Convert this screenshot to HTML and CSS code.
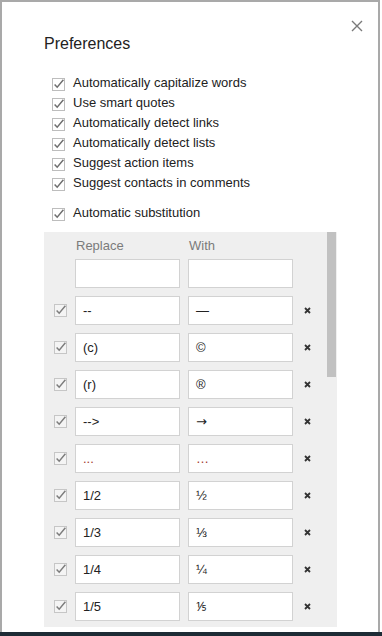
FILE: index.html
```html
<!DOCTYPE html>
<html lang="en">
<head>
  <meta charset="UTF-8">
  <meta name="viewport" content="width=device-width, initial-scale=1.0">
  <title>Preferences</title>
  <link rel="stylesheet" href="styles.css">
</head>
<body>
  <!-- shared icons -->
  <svg class="sprite" aria-hidden="true">
    <symbol id="check-on" viewBox="0 0 13 13">
      <rect x="0.5" y="0.5" width="12" height="12" fill="#fff" stroke="#bdbdbd"/>
      <path d="M2.6 6.4 L5.2 9.2 L11.4 1.8" fill="none" stroke="#6f6f6f" stroke-width="1.5"/>
    </symbol>
    <symbol id="check-dim" viewBox="0 0 13 13">
      <rect x="0.5" y="0.5" width="12" height="12" fill="#f4f4f4" stroke="#c6c6c6"/>
      <path d="M2.6 6.4 L5.2 9.2 L11.4 1.8" fill="none" stroke="#7d7d7d" stroke-width="1.5"/>
    </symbol>
    <symbol id="remove" viewBox="0 0 7 7">
      <path d="M1 1 L6 6 M6 1 L1 6" stroke="#333" stroke-width="1.8"/>
    </symbol>
  </svg>

  <div class="window">
    <div class="dialog">
      <div class="header">
        <h1 class="title">Preferences</h1>
        <svg class="close" viewBox="0 0 12 12">
          <path d="M1 1 L11 11 M11 1 L1 11" stroke="#7a7a7a" stroke-width="1.4"/>
        </svg>
      </div>

      <div class="options">
        <div class="option"><svg><use href="#check-on"/></svg>Automatically capitalize words</div>
        <div class="option"><svg><use href="#check-on"/></svg>Use smart quotes</div>
        <div class="option"><svg><use href="#check-on"/></svg>Automatically detect links</div>
        <div class="option"><svg><use href="#check-on"/></svg>Automatically detect lists</div>
        <div class="option"><svg><use href="#check-on"/></svg>Suggest action items</div>
        <div class="option"><svg><use href="#check-on"/></svg>Suggest contacts in comments</div>
        <div class="option spaced"><svg><use href="#check-on"/></svg>Automatic substitution</div>
      </div>

      <div class="subs">
        <div class="subs-list">
          <div class="sub-head">
            <span>Replace</span>
            <span>With</span>
          </div>

          <div class="sub-row first">
            <div class="spacer"></div>
            <div class="field"></div>
            <div class="field"></div>
          </div>

          <div class="sub-row">
            <svg class="box"><use href="#check-dim"/></svg>
            <div class="field">--</div>
            <div class="field">—</div>
            <svg class="del"><use href="#remove"/></svg>
          </div>
          <div class="sub-row">
            <svg class="box"><use href="#check-dim"/></svg>
            <div class="field">(c)</div>
            <div class="field">©</div>
            <svg class="del"><use href="#remove"/></svg>
          </div>
          <div class="sub-row">
            <svg class="box"><use href="#check-dim"/></svg>
            <div class="field">(r)</div>
            <div class="field">®</div>
            <svg class="del"><use href="#remove"/></svg>
          </div>
          <div class="sub-row">
            <svg class="box"><use href="#check-dim"/></svg>
            <div class="field">--&gt;</div>
            <div class="field arrow">→</div>
            <svg class="del"><use href="#remove"/></svg>
          </div>
          <div class="sub-row">
            <svg class="box"><use href="#check-dim"/></svg>
            <div class="field dots">...</div>
            <div class="field dots">…</div>
            <svg class="del"><use href="#remove"/></svg>
          </div>
          <div class="sub-row">
            <svg class="box"><use href="#check-dim"/></svg>
            <div class="field">1/2</div>
            <div class="field">½</div>
            <svg class="del"><use href="#remove"/></svg>
          </div>
          <div class="sub-row">
            <svg class="box"><use href="#check-dim"/></svg>
            <div class="field">1/3</div>
            <div class="field">⅓</div>
            <svg class="del"><use href="#remove"/></svg>
          </div>
          <div class="sub-row">
            <svg class="box"><use href="#check-dim"/></svg>
            <div class="field">1/4</div>
            <div class="field">¼</div>
            <svg class="del"><use href="#remove"/></svg>
          </div>
          <div class="sub-row">
            <svg class="box"><use href="#check-dim"/></svg>
            <div class="field">1/5</div>
            <div class="field">⅕</div>
            <svg class="del"><use href="#remove"/></svg>
          </div>
        </div>
        <div class="scrollbar">
          <div class="thumb"></div>
        </div>
      </div>
    </div>
  </div>
</body>
</html>
```

FILE: styles.css
```css
* {
  box-sizing: border-box;
}

body {
  margin: 0;
  height: 636px;
  overflow: hidden;
  background: #1d2b35;
  font-family: "Liberation Sans", Arial, sans-serif;
  font-size: 13px;
  color: #222;
}

.sprite {
  position: absolute;
  width: 0;
  height: 0;
}

/* white sheet behind the dialog */
.window {
  width: 382px;
  height: 632px;
  background: #fff;
}

.dialog {
  width: 380px;
  height: 632px;
  border: 2px solid #a9a9a9;
  border-bottom: none;
  padding: 18px 15px 0 42px;
}

.header {
  display: flex;
  justify-content: space-between;
  align-items: flex-start;
}

.title {
  margin: 14px 0 0;
  font-size: 16px;
  line-height: 20px;
  font-weight: normal;
  color: #222;
}

.close {
  width: 12px;
  height: 12px;
}

/* checkbox list */
.options {
  margin-top: 19px;
}

.option {
  display: flex;
  height: 20px;
  line-height: 20px;
  padding-left: 8px;
  white-space: nowrap;
}

.option svg {
  flex: none;
  width: 13px;
  height: 13px;
  margin: 5px 8px 0 0;
}

.option.spaced {
  margin-top: 10px;
}

/* substitution table */
.subs {
  display: flex;
  width: 293px;
  height: 395px;
  margin-top: 9px;
  background: #efefef;
}

.subs-list {
  flex: 1;
  padding: 5px 0 0 10px;
  overflow: hidden;
}

.sub-head {
  display: flex;
  gap: 8px;
  padding-left: 21px;
  line-height: 17px;
  color: #7b7b7b;
}

.sub-head span {
  width: 105px;
  padding-left: 1px;
}

.sub-row {
  display: flex;
  align-items: center;
  gap: 8px;
  margin-top: 8px;
}

.sub-row.first {
  margin-top: 5px;
}

.spacer,
.box {
  flex: none;
  width: 13px;
  height: 13px;
}

.field {
  flex: none;
  width: 105px;
  height: 29px;
  padding: 0 7px;
  border: 1px solid #d2d2d2;
  background: #fff;
  line-height: 27px;
  white-space: nowrap;
  overflow: hidden;
}

.field.dots {
  color: #a33a2c;
}

.field.arrow {
  font-family: "DejaVu Sans", sans-serif;
}

.del {
  flex: none;
  width: 7px;
  height: 7px;
  margin-left: 3px;
}

.scrollbar {
  width: 10px;
}

.thumb {
  height: 145px;
  margin-right: 1px;
  background: #c1c1c1;
}
```
